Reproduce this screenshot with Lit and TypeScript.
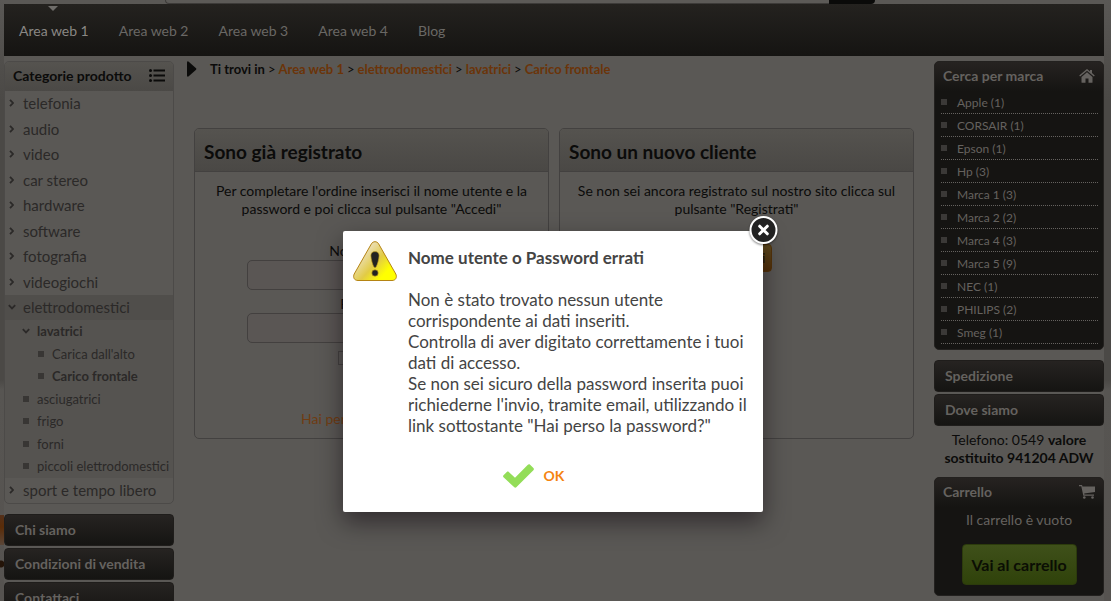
import { LitElement, html, css, svg } from "lit";
import { customElement, state } from "lit/decorators.js";
import { classMap } from "lit/directives/class-map.js";

type Row = { text: string; level: number; kind: "closed" | "open" | "leaf"; bold?: boolean; active?: boolean };

const AREAS = ["Area web 1", "Area web 2", "Area web 3", "Area web 4", "Blog"];
const TOP: Row[] = [
  ...["telefonia", "audio", "video", "car stereo", "hardware", "software", "fotografia", "videogiochi"].map(
    (text): Row => ({ text, level: 0, kind: "closed" })
  ),
  { text: "elettrodomestici", level: 0, kind: "open", active: true },
];
const SUB: Row[] = [
  { text: "lavatrici", level: 1, kind: "open", bold: true },
  { text: "Carica dall'alto", level: 2, kind: "leaf" },
  { text: "Carico frontale", level: 2, kind: "leaf", bold: true },
  { text: "asciugatrici", level: 1, kind: "leaf" },
  { text: "frigo", level: 1, kind: "leaf" },
  { text: "forni", level: 1, kind: "leaf" },
  { text: "piccoli elettrodomestici", level: 1, kind: "leaf" },
];
const BOTTOM: Row[] = [{ text: "sport e tempo libero", level: 0, kind: "closed" }];
const BRANDS = [
  "Apple (1)", "CORSAIR (1)", "Epson (1)", "Hp (3)", "Marca 1 (3)", "Marca 2 (2)",
  "Marca 4 (3)", "Marca 5 (9)", "NEC (1)", "PHILIPS (2)", "Smeg (1)",
];
const TRAIL = ["Area web 1", "elettrodomestici", "lavatrici", "Carico frontale"];

const chevron = (open: boolean) => html`<svg class="mark" width="8" height="8" viewBox="0 0 8 8" aria-hidden="true">
  ${open
    ? svg`<path d="M0.8 2.2 4 5.4 7.2 2.2" fill="none" stroke="currentColor" stroke-width="1.8"/>`
    : svg`<path d="M2 0.8 5 4 2 7.2" fill="none" stroke="currentColor" stroke-width="1.8"/>`}
</svg>`;

@customElement("app-root")
export class AppRoot extends LitElement {
  @state() private dialogOpen = true;

  static styles = css`
    :host {
      display: block;
      position: relative;
      height: 100vh;
      overflow: hidden;
      background:
        linear-gradient(#54301a, #5a2c08 40%, #5a4638) 0 515px / 4px 30px no-repeat,
        radial-gradient(circle at 1px 4px, #241408 3px, transparent 4px) 0 560px / 4px 9px no-repeat,
        linear-gradient(#5a5855, #4b4946 100px, #4b4946 380px, #575552 390px, #565350);
      color: #0b0b0a;
      font: 14px/18px Lato, "Open Sans", sans-serif;
    }
    * { box-sizing: border-box; }
    a { color: inherit; text-decoration: none; }
    ul { list-style: none; margin: 0; padding: 0; }
    h1, h2, p { margin: 0; }
    button { font: inherit; color: inherit; cursor: pointer; }
    .page { margin: 0 7px 0 4px; background: #5a5855; min-height: 100vh; }
    .strip { height: 4px; display: flex; padding: 0 229px 0 161px; }
    .search { flex: 1; border-bottom: 1px solid #3d3b39; border-left: 1px solid #3d3b39; border-bottom-left-radius: 4px; background: #5c5a57; height: 4px; }
    .go { width: 46px; background: #0a0a09; border-bottom-right-radius: 4px; }
    .nav { height: 52px; display: flex; background: linear-gradient(#24221f, #151412); color: #6a6865; font-size: 14px; line-height: 54px; }
    .nav a { position: relative; padding: 0 15px; }
    .nav a.current { color: #8a8784; }
    .nav a.current::before {
      content: ""; position: absolute; top: 2px; left: 44px;
      border: 5px solid transparent; border-top-color: #6f6d6a; border-bottom: 0;
    }
    .cols { display: grid; grid-template-columns: 170px minmax(0, 1fr) 170px; column-gap: 10px; padding-top: 5px; align-items: start; }
    .side { display: flex; flex-direction: column; }
    .cats { border: 1px solid #4c4a48; border-radius: 5px; overflow: hidden; color: #2b2928; }
    .head { height: 29px; display: flex; align-items: center; justify-content: space-between; padding: 0 8px 2px 8px; font-size: 14px; font-weight: 700; }
    .cats .head { background: linear-gradient(#55534f, #4b4946); color: #0b0b0a; }
    .row { display: flex; align-items: center; height: 25px; padding-bottom: 1px; font-size: 15px; white-space: nowrap; }
    .row.top:nth-child(even) { height: 26px; }
    .row .mark { margin: 0 7px 0 3px; flex: none; }
    .row.active { background: #504e4b; }
    .subs { background: #555350; }
    .subs .row { height: 23px; font-size: 13px; }
    .subs .row:nth-child(even) { height: 22px; }
    .subs .row .mark { margin: 0 7px 0 17px; }
    .subs .row.deep .mark { margin-left: 32px; }
    .bold { font-weight: 700; }
    .sq { width: 6px; height: 6px; margin: 0 1px; background: #383634; display: block; }
    .links { display: grid; gap: 2px; margin-top: 10px; }
    .bar { height: 32px; border: 1px solid #1f1d1b; border-radius: 4px; padding: 0 10px; line-height: 29px; font-size: 14px; font-weight: 700; color: #65625f; background: linear-gradient(#262321, #151412); }
    main { padding: 0 10px 0 0; margin-left: 3px; }
    .crumbs { display: flex; align-items: center; height: 16px; font-size: 13px; gap: 3px; }
    .crumbs svg { margin-right: 10px; }
    .crumbs b { color: #0b0b0a; }
    .crumbs a { color: #6b3409; font-weight: 700; }
    .cards { display: grid; grid-template-columns: 1fr 1fr; gap: 10px; margin: 51px 0 0 7px; }
    .card { height: 311px; border: 1px solid #434140; border-radius: 5px; text-align: center; overflow: hidden; }
    .card h2 { height: 43px; padding-left: 9px; text-align: left; font-size: 19px; line-height: 46px; font-weight: 700; border-bottom: 1px solid #434140; background: linear-gradient(#55534f, #4a4845); }
    .card p { padding: 10px 10px 0; }
    .card form { display: grid; justify-items: center; padding-top: 24px; }
    .card label { display: block; }
    .card .text { width: 250px; height: 30px; border: 1px solid #43403f; border-radius: 5px; background: #5a5654; margin-bottom: 5px; }
    .card .remember { display: flex; align-items: center; gap: 6px; height: 20px; }
    .remember input { appearance: none; width: 14px; height: 14px; margin: 0; border: 1px solid #454341; }
    .btn { height: 28px; padding: 0 4px; border: 1px solid #543309; border-radius: 4px; background: linear-gradient(#5d491d, #543007); color: #1c1508; }
    .card .lost { color: #703c12; margin-top: 14px; }
    .card .join { margin-top: 26px; width: 70px; padding: 0; }
    .dark { background: #151412; border: 1px solid #23211f; border-radius: 5px; overflow: hidden; color: #65625f; }
    .dark .head { background: linear-gradient(#262321, #151412); }
    .brands { padding: 0 5px 5px 6px; font-size: 12px; }
    .brands li { height: 23px; display: flex; align-items: center; border-bottom: 1px dotted #65625f; padding-top: 1px; }
    .brands .sq { margin: 0 10px 2px 0; background: #3b3937; }
    .phone { text-align: center; padding: 5px 4px 0; }
    .cart { margin-top: 10px; text-align: center; padding-bottom: 10px; }
    .cart .msg { padding-top: 4px; }
    .buy { margin-top: 15px; height: 41px; width: 115px; padding: 0; border: 1px solid #2c3b0c; border-radius: 4px; background: linear-gradient(#3f501a, #2f420a); color: #0b0e04; font-size: 16px; font-weight: 700; white-space: nowrap; }
    .overlay { position: absolute; inset: 0; display: flex; justify-content: center; align-items: flex-start; padding: 231px 5px 0 0; }
    .dialog { position: relative; width: 420px; display: grid; grid-template-columns: 44px 1fr; column-gap: 11px; padding: 10px 14px 22px 10px; background: #fff; color: #444; border-radius: 2px; box-shadow: 0 10px 25px rgba(10, 0, 10, 0.5); font-size: 17px; line-height: 21px; }
    .dialog h1 { font-size: 17px; line-height: 21px; font-weight: 700; padding-top: 6px; margin-bottom: 21px; }
    .dialog p { white-space: nowrap; }
    .actions { grid-column: 1 / -1; display: flex; justify-content: center; margin-top: 26px; padding-right: 35px; }
    .ok { display: flex; align-items: center; gap: 10px; border: 0; padding: 0; background: none; color: #f58410; font-weight: 700; font-size: 14px; line-height: 28px; }
    .close { position: absolute; top: -16px; right: -16px; width: 31px; height: 31px; border: 0; padding: 0; background: none; }
    .close svg { display: block; filter: drop-shadow(0 1px 1px rgba(0, 0, 0, 0.5)); }
  `;

  private row(r: Row) {
    return html`<li class=${classMap({ row: true, top: r.level === 0, deep: r.level === 2, active: !!r.active, bold: !!r.bold })}>
      ${r.kind === "leaf"
        ? html`<span class="mark"><i class="sq"></i></span>`
        : chevron(r.kind === "open")}<a href="#">${r.text}</a>
    </li>`;
  }

  private dialog() {
    return html`<div class="overlay">
      <div class="dialog" role="alertdialog" aria-labelledby="title" aria-describedby="msg">
        <svg width="44" height="40" viewBox="0 0 44 40" aria-hidden="true">
          <defs><linearGradient id="warn" x1="0.1" y1="0.3" x2="0.85" y2="0.9">
            <stop offset="0.15" stop-color="#eadca8"/><stop offset="0.5" stop-color="#e2cb45"/><stop offset="0.85" stop-color="#ffff00"/>
          </linearGradient></defs>
          <path d="M18.4 2.8C20 0 24 0 25.6 2.8L42.8 33C44.3 36.2 42.8 39.5 39 39.5H5C1.2 39.5-0.3 36.2 1.2 33Z" fill="url(#warn)" stroke="#b58413"/>
          <path d="M22 10.6c2.600 0 4.300 1.600 4.100 4.300-.2 3.300-1.600 8.700-3 11-.5.800-1.700.800-2.200 0-1.400-2.300-2.800-7.700-3-11-.2-2.700 1.500-4.300 4.100-4.300Z" fill="#222" stroke="#c8a21a" stroke-width="0.6"/>
          <circle cx="22" cy="32" r="3.200" fill="#222" stroke="#c8a21a" stroke-width="0.6"/>
        </svg>
        <div>
          <h1 id="title">Nome utente o Password errati</h1>
          <p id="msg">Non è stato trovato nessun utente<br />corrispondente ai dati inseriti.<br />Controlla di aver digitato correttamente i tuoi<br />dati di accesso.<br />Se non sei sicuro della password inserita puoi<br />richiederne l'invio, tramite email, utilizzando il<br />link sottostante "Hai perso la password?"</p>
        </div>
        <div class="actions">
          <button class="ok" @click=${() => (this.dialogOpen = false)}>
            <svg width="31" height="24" viewBox="0 0 31 24" aria-hidden="true"><path d="M0.500 13.200c-.6-.6-.6-1.300 0-1.900l3.300-3.300c.6-.6 1.400-.6 2 0l6.200 5.800L24.600 1c.8-.8 1.700-1 2.500-.2l3.300 3.300c.7.700.6 1.500 0 2.200L13.300 23.300c-.6.6-1.400.6-2 0Z" fill="#93dd58"/></svg>
            OK
          </button>
        </div>
        <button class="close" aria-label="Chiudi" @click=${() => (this.dialogOpen = false)}>
          <svg width="31" height="31" viewBox="0 0 31 31"><circle cx="15.500" cy="15" r="13" fill="#222" stroke="#fff" stroke-width="2"/>
          <path d="M11.700 11.200l7.600 7.600M19.300 11.200l-7.600 7.600" stroke="#fff" stroke-width="3" stroke-linecap="round"/></svg>
        </button>
      </div>
    </div>`;
  }

  render() {
    return html`
      <div class="page">
        <div class="strip"><div class="search"></div><div class="go"></div></div>
        <nav class="nav">${AREAS.map((a, i) => html`<a href="#" class=${classMap({ current: i === 0 })}>${a}</a>`)}</nav>
        <div class="cols">
          <aside class="side">
            <section class="cats">
              <div class="head">Categorie prodotto
                <svg width="16" height="13" viewBox="0 0 16 13" aria-hidden="true" fill="#0b0b0a"><circle cx="1.500" cy="1.500" r="1.500"/><circle cx="1.500" cy="6.500" r="1.500"/><circle cx="1.500" cy="11.500" r="1.500"/><path d="M4.500.5H16v2H4.500ZM4.500 5.500H16v2H4.500ZM4.500 10.500H16v2H4.500Z"/></svg>
              </div>
              <ul>${TOP.map((r) => this.row(r))}</ul>
              <ul class="subs">${SUB.map((r) => this.row(r))}</ul>
              <ul>${BOTTOM.map((r) => this.row(r))}</ul>
            </section>
            <div class="links">
              <a class="bar" href="#">Chi siamo</a><a class="bar" href="#">Condizioni di vendita</a><a class="bar" href="#">Contattaci</a>
            </div>
          </aside>
          <main>
            <div class="crumbs">
              <svg width="10" height="16" viewBox="0 0 10 16" aria-hidden="true"><path d="M0 1.500Q.3-.5 2 .9L9 7.300Q9.600 8 9 8.700L2 15.100Q.3 16.500 0 14.500Z" fill="#0b0b0a"/></svg>
              <b>Ti trovi in</b>${TRAIL.map((t) => html`<span>&gt;</span><a href="#">${t}</a>`)}
            </div>
            <div class="cards">
              <section class="card">
                <h2>Sono già registrato</h2>
                <p>Per completare l'ordine inserisci il nome utente e la<br />password e poi clicca sul pulsante "Accedi"</p>
                <form @submit=${(e: Event) => e.preventDefault()}>
                  <label for="user">Nome utente:</label><input class="text" id="user" type="text" />
                  <label for="pass">Password:</label><input class="text" id="pass" type="password" />
                  <label class="remember"><input type="checkbox" />Ricorda</label>
                  <button class="btn">Accedi</button>
                  <a class="lost" href="#">Hai perso la password?</a>
                </form>
              </section>
              <section class="card">
                <h2>Sono un nuovo cliente</h2>
                <p>Se non sei ancora registrato sul nostro sito clicca sul<br />pulsante "Registrati"</p>
                <button class="btn join">Registrati</button>
              </section>
            </div>
          </main>
          <aside class="side">
            <section class="dark">
              <div class="head">Cerca per marca
                <svg width="16" height="14" viewBox="0 0 16 14" aria-hidden="true" fill="#65625f"><path d="M8 3.200 13.500 8v5.200q0 .6-.6.600H9.500V9.500h-3v4.300H3.100q-.6 0-.6-.6V8Z"/><path d="M7.300.4q.7-.6 1.400 0L11 2.400V1h2v3.100l2.800 2.500-.9 1L8 1.800 1.100 7.600l-.9-1Z"/></svg>
              </div>
              <ul class="brands">${BRANDS.map((b) => html`<li><i class="sq"></i><a href="#">${b}</a></li>`)}</ul>
            </section>
            <div class="links"><a class="bar" href="#">Spedizione</a><a class="bar" href="#">Dove siamo</a></div>
            <p class="phone">Telefono: 0549 <b>valore sostituito 941204 ADW</b></p>
            <section class="dark cart">
              <div class="head">Carrello
                <svg width="16" height="14" viewBox="0 0 16 14" aria-hidden="true" fill="#65625f"><path d="M0 0h3l.5 1.500H16V7L5.200 8.400l.2 1.100H15v1.200H4.300L2.300 1.200H0Z"/><circle cx="5.300" cy="12.500" r="1.300"/><circle cx="13.500" cy="12.500" r="1.300"/></svg>
              </div>
              <div class="msg">Il carrello è vuoto</div>
              <button class="buy">Vai al carrello</button>
            </section>
          </aside>
        </div>
      </div>
      ${this.dialogOpen ? this.dialog() : ""}
    `;
  }
}
